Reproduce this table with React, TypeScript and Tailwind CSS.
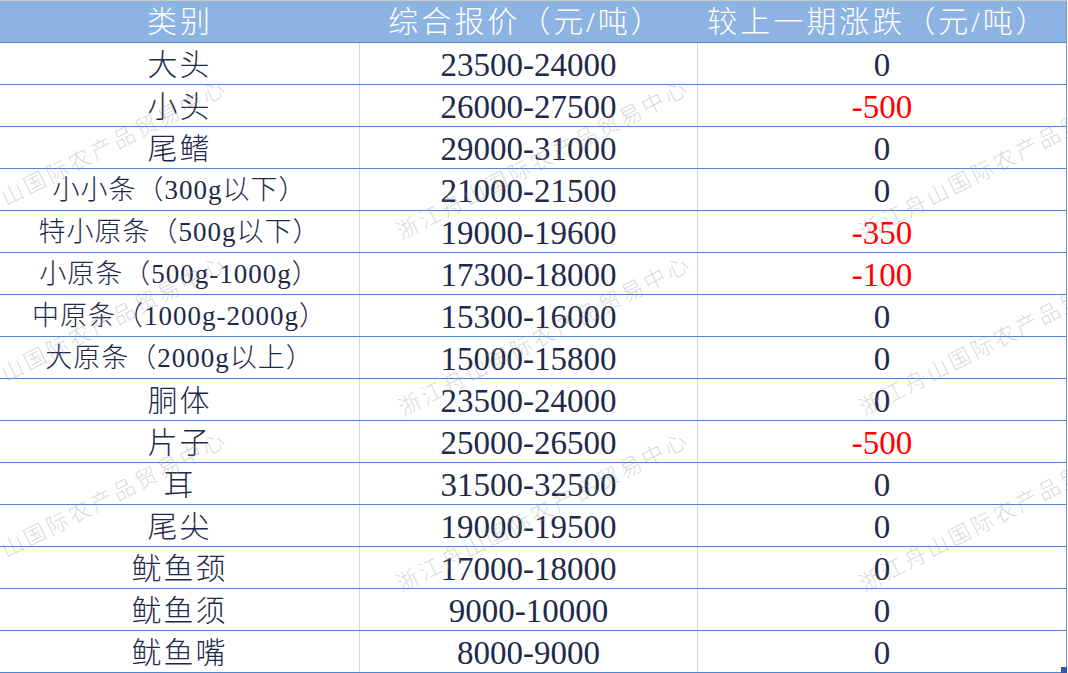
import React from "react";

const rows: [string, string, string][] = [
  ["大头", "23500-24000", "0"],
  ["小头", "26000-27500", "-500"],
  ["尾鳍", "29000-31000", "0"],
  ["小小条（300g以下）", "21000-21500", "0"],
  ["特小原条（500g以下）", "19000-19600", "-350"],
  ["小原条（500g-1000g）", "17300-18000", "-100"],
  ["中原条（1000g-2000g）", "15300-16000", "0"],
  ["大原条（2000g以上）", "15000-15800", "0"],
  ["胴体", "23500-24000", "0"],
  ["片子", "25000-26500", "-500"],
  ["耳", "31500-32500", "0"],
  ["尾尖", "19000-19500", "0"],
  ["鱿鱼颈", "17000-18000", "0"],
  ["鱿鱼须", "9000-10000", "0"],
  ["鱿鱼嘴", "8000-9000", "0"],
];

const WM = "浙江舟山国际农产品贸易中心";
const wmClass =
  "absolute -translate-x-1/2 -translate-y-1/2 -rotate-[27deg] whitespace-nowrap text-[22px] font-light tracking-[3px] text-[rgba(150,150,150,0.38)] font-['Noto_Sans_CJK_SC',sans-serif] pointer-events-none select-none";

export default function App() {
  return (
    <div className="relative w-[1068px] h-[673px] overflow-hidden bg-white font-light font-['Liberation_Serif','Noto_Sans_CJK_SC',serif]">
      <div className="w-[1067px] border-t border-t-[#c9c9c9] border-r border-r-[#6f98d8]">
        {/* header */}
        <div className="flex h-[42px] bg-[#8db3e2] border-b border-b-[#4f86d4] text-white text-[30px] tracking-[3px] leading-none">
          <div className="w-[360px] flex items-center justify-center">类别</div>
          <div className="w-[338px] flex items-center justify-center pr-[6px]">综合报价（元/吨）</div>
          <div className="flex-1 flex items-center justify-center pr-[8px]">较上一期涨跌（元/吨）</div>
        </div>
        {rows.map(([name, price, chg], i) => {
          const long = /[（]/.test(name);
          const neg = chg.startsWith("-");
          return (
            <div
              key={i}
              className="flex h-[42px] border-b border-b-[#4f86d4] text-[#1e2a4a] leading-none"
            >
              <div
                className={
                  long
                    ? "w-[360px] border-r border-r-[#d6d6d6] flex items-center justify-center pt-[2px] text-[27px] tracking-[1px]"
                    : "w-[360px] border-r border-r-[#d6d6d6] flex items-center justify-center pt-[2px] text-[30px] tracking-[2px]"
                }
              >
                {name}
              </div>
              <div className="w-[338px] border-r border-r-[#d6d6d6] flex items-center justify-center pt-[4px] text-[33px]">
                {price}
              </div>
              <div
                className={
                  neg
                    ? "flex-1 flex items-center justify-center pt-[4px] text-[33px] text-[#ff0000]"
                    : "flex-1 flex items-center justify-center pt-[4px] text-[33px]"
                }
              >
                {chg}
              </div>
            </div>
          );
        })}
      </div>

      {/* watermarks */}
      <span className={`${wmClass} left-[80px] top-[158px]`}>{WM}</span>
      <span className={`${wmClass} left-[542px] top-[158px]`}>{WM}</span>
      <span className={`${wmClass} left-[1005px] top-[158px]`}>{WM}</span>
      <span className={`${wmClass} left-[80px] top-[334px]`}>{WM}</span>
      <span className={`${wmClass} left-[544px] top-[334px]`}>{WM}</span>
      <span className={`${wmClass} left-[1005px] top-[334px]`}>{WM}</span>
      <span className={`${wmClass} left-[80px] top-[510px]`}>{WM}</span>
      <span className={`${wmClass} left-[542px] top-[510px]`}>{WM}</span>
      <span className={`${wmClass} left-[1005px] top-[510px]`}>{WM}</span>

      {/* fill handle */}
      <div className="absolute left-[1061px] top-[667px] w-[6px] h-[6px] bg-[#3456a8]" />
    </div>
  );
}
